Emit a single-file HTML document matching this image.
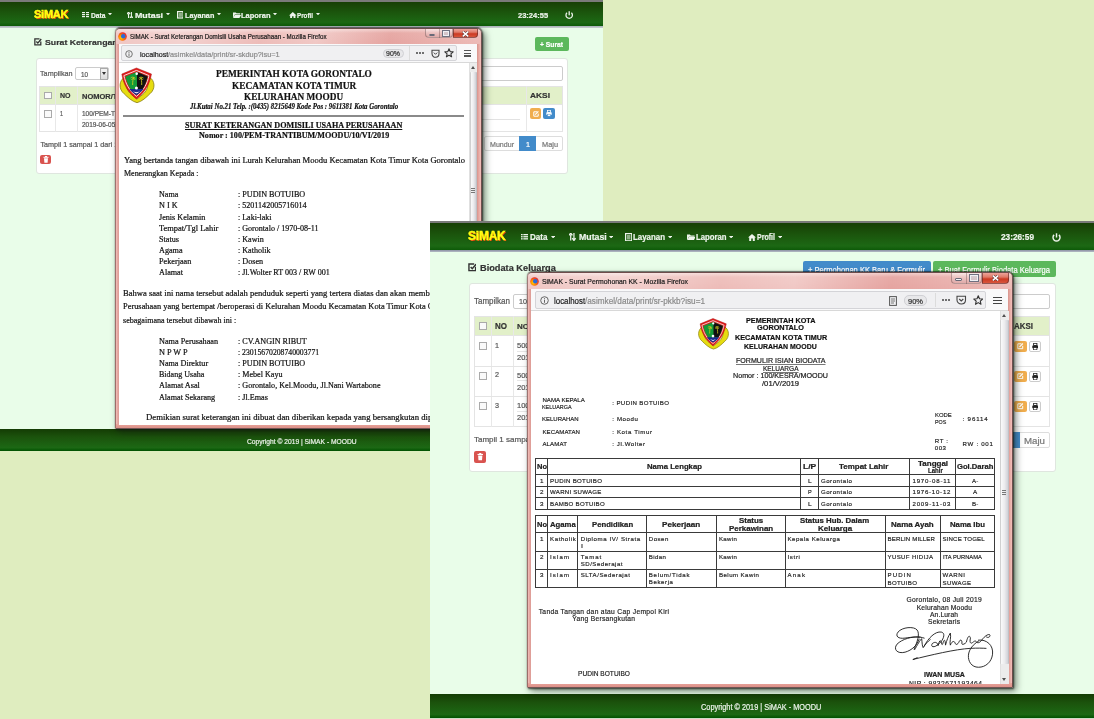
<!DOCTYPE html><html><head><meta charset="utf-8"><style>
html,body{margin:0;padding:0;}
body{width:1094px;height:719px;overflow:hidden;position:relative;background:#dfedbf;font-family:"Liberation Sans",sans-serif;}
.a{position:absolute;box-sizing:border-box;}
div.root{position:absolute;left:0;top:0;width:1094px;height:719px;filter:blur(0.3px);}
.t{white-space:nowrap;transform-origin:0 0;-webkit-text-stroke:0.2px currentColor;}

</style></head><body><div class="root"><div class="a " style="left:0.00px;top:0.00px;width:603.00px;height:451.00px;overflow:hidden;background:#e9fde9;"><div class="a" style="left:0.00px;top:0.00px;width:603.00px;height:1.50px;background:#7a7a7a;"></div><div class="a" style="left:0.00px;top:1.50px;width:603.00px;height:24.50px;background:linear-gradient(#173f05 0%,#1b560d 45%,#1c6814 85%,#0d5a08 100%);"></div><div class="a" style="left:0.00px;top:26.00px;width:603.00px;height:2.00px;background:linear-gradient(#a8aeb8,#c8d0d0);"></div><span class="a t" id="t0" style="transform:scaleX(1.0443);left:34.30px;top:8.18px;font:700 10.5px/13.65px 'Liberation Sans', sans-serif;color:#ffff10;-webkit-text-stroke:0.45px #ffff10;text-shadow:0.9px 0.5px 0 #e83a10,0 0 1.5px rgba(0,40,0,0.9);letter-spacing:-0.2px;">SiMAK</span><svg class="a" style="left:82.30px;top:12.00px;" width="7.0" height="6.0" viewBox="0 0 7.0 6.0"><rect x="0.00" y="0.00" width="3.00" height="1.20" fill="#eef4ec"/><rect x="4.00" y="0.00" width="3.00" height="1.20" fill="#eef4ec"/><rect x="0.00" y="2.00" width="3.00" height="1.20" fill="#eef4ec"/><rect x="4.00" y="2.00" width="3.00" height="1.20" fill="#eef4ec"/><rect x="0.00" y="4.00" width="3.00" height="1.20" fill="#eef4ec"/><rect x="4.00" y="4.00" width="3.00" height="1.20" fill="#eef4ec"/></svg><span class="a t" id="t1" style="transform:scaleX(0.9161);left:90.50px;top:10.66px;font:700 7.3px/9.49px 'Liberation Sans', sans-serif;color:#eef4ec;">Data</span><svg class="a" style="left:108.00px;top:13.00px;" width="4.0" height="2.4000000000000004" viewBox="0 0 4.0 2.4000000000000004"><path d="M0 0H4.0L2.0 2.4000000000000004Z" fill="#eef4ec"/></svg><svg class="a" style="left:127.00px;top:11.60px;" width="5.95" height="6.8" viewBox="0 0 5.95 6.8"><path d="M1.53 6.8 V1.5 M0 2.125 L1.53 0 L3.06 2.125 M4.42 0 V5.3 M2.8899999999999997 4.675 L4.42 6.8 L5.95 4.675" stroke="#eef4ec" stroke-width="1.105" fill="none"/></svg><span class="a t" id="t2" style="transform:scaleX(1.2116);left:135.00px;top:10.66px;font:700 7.3px/9.49px 'Liberation Sans', sans-serif;color:#eef4ec;">Mutasi</span><svg class="a" style="left:166.00px;top:13.00px;" width="4.0" height="2.4000000000000004" viewBox="0 0 4.0 2.4000000000000004"><path d="M0 0H4.0L2.0 2.4000000000000004Z" fill="#eef4ec"/></svg><svg class="a" style="left:176.60px;top:11.20px;" width="6.6499999999999995" height="7.6" viewBox="0 0 6.6499999999999995 7.6"><rect x="0.6" y="0.6" width="5.449999999999999" height="6.3999999999999995" fill="none" stroke="#eef4ec" stroke-width="1.2"/><rect x="1.71" y="1.71" width="3.2299999999999995" height="4.18" fill="#eef4ec" opacity="0.55"/></svg><span class="a t" id="t3" style="transform:scaleX(0.9896);left:184.60px;top:10.66px;font:700 7.3px/9.49px 'Liberation Sans', sans-serif;color:#eef4ec;">Layanan</span><svg class="a" style="left:216.50px;top:13.00px;" width="4.0" height="2.4000000000000004" viewBox="0 0 4.0 2.4000000000000004"><path d="M0 0H4.0L2.0 2.4000000000000004Z" fill="#eef4ec"/></svg><svg class="a" style="left:232.90px;top:11.85px;" width="8.1" height="6.3" viewBox="0 0 8.1 6.3"><path d="M0 6.3 V0.5 H2.7 L3.6 1.35 H7.2 V2.52 H1.8 Z" fill="#eef4ec"/><path d="M0 6.3 L1.8 2.8800000000000003 H8.1 L6.3 6.3 Z" fill="#eef4ec"/></svg><span class="a t" id="t4" style="transform:scaleX(1.0244);left:241.00px;top:10.66px;font:700 7.3px/9.49px 'Liberation Sans', sans-serif;color:#eef4ec;">Laporan</span><svg class="a" style="left:273.40px;top:13.00px;" width="4.0" height="2.4000000000000004" viewBox="0 0 4.0 2.4000000000000004"><path d="M0 0H4.0L2.0 2.4000000000000004Z" fill="#eef4ec"/></svg><svg class="a" style="left:289.00px;top:11.68px;" width="7.6" height="6.6499999999999995" viewBox="0 0 7.6 6.6499999999999995"><path d="M0 3.42 L3.8 0 L7.6 3.42 H6.46 V6.6499999999999995 H4.56 V4.369999999999999 H3.04 V6.6499999999999995 H1.14 V3.42 Z" fill="#eef4ec"/></svg><span class="a t" id="t5" style="transform:scaleX(0.8576);left:297.00px;top:10.66px;font:700 7.3px/9.49px 'Liberation Sans', sans-serif;color:#eef4ec;">Profil</span><svg class="a" style="left:316.00px;top:13.00px;" width="4.0" height="2.4000000000000004" viewBox="0 0 4.0 2.4000000000000004"><path d="M0 0H4.0L2.0 2.4000000000000004Z" fill="#eef4ec"/></svg><span class="a t" id="t6" style="transform:scaleX(1.0302);left:518.40px;top:10.66px;font:700 7.3px/9.49px 'Liberation Sans', sans-serif;color:#eef4ec;">23:24:55</span><svg class="a" style="left:564.60px;top:11.00px;" width="8.4" height="8.4" viewBox="0 0 8.4 8.4"><path d="M2.0 1.8000000000000003 A3.2 3.2 0 1 0 6.4 1.8000000000000003" stroke="#eef4ec" stroke-width="1.3" fill="none"/><path d="M4.2 0.3 V4.2" stroke="#eef4ec" stroke-width="1.3"/></svg><svg class="a" style="left:33.90px;top:38.38px;" width="7.6499999999999995" height="7.6499999999999995" viewBox="0 0 7.6499999999999995 7.6499999999999995"><path d="M5.5249999999999995 0.85 H0.85 V6.8 H6.8 V3.4" fill="none" stroke="#333" stroke-width="1.275"/><path d="M2.38 3.57 L3.8249999999999997 5.1 L7.225 1.02" fill="none" stroke="#333" stroke-width="1.36"/></svg><span class="a t" id="t7" style="transform:scaleX(1.0902);left:44.80px;top:38.00px;font:700 8px/10.4px 'Liberation Sans', sans-serif;color:#333;">Surat Keterangan</span><div class="a" style="left:534.50px;top:36.90px;width:34.00px;height:13.70px;background:#5cb85c;border-radius:2px;"></div><span class="a t" id="t8" style="transform:scaleX(0.8970);left:540.00px;top:39.92px;font:700 7.5px/9.75px 'Liberation Sans', sans-serif;color:#fff;">+ Surat</span><div class="a" style="left:35.90px;top:57.60px;width:532.60px;height:116.40px;background:#fff;border:1px solid #dfe6df;border-radius:3px;"></div><span class="a t" id="t9" style="transform:scaleX(0.9052);left:40.40px;top:69.00px;font:400 8px/10.4px 'Liberation Sans', sans-serif;color:#555;">Tampilkan</span><div class="a" style="left:75.40px;top:66.50px;width:33.60px;height:13.90px;background:#fff;border:1px solid #ccc;border-radius:2px;"></div><span class="a t" id="t10" style="transform:scaleX(0.8978);left:81.00px;top:70.25px;font:400 7px/9.1px 'Liberation Sans', sans-serif;color:#555;">10</span><div class="a" style="left:100.00px;top:67.50px;width:8.00px;height:12.00px;background:linear-gradient(#f4f4f4,#dcdcdc);border:1px solid #aaa;"></div><svg class="a" style="left:102.00px;top:72.00px;" width="4" height="3" viewBox="0 0 4 3"><path d="M0 0H4L2 3Z" fill="#333"/></svg><div class="a" style="left:440.00px;top:66.00px;width:122.60px;height:14.50px;background:#fff;border:1px solid #ccc;border-radius:2px;"></div><div class="a" style="left:39.40px;top:85.90px;width:523.20px;height:45.90px;background:#fff;border:1px solid #e4e4e4;"></div><div class="a" style="left:39.40px;top:85.90px;width:523.20px;height:18.80px;background:#e2f0c9;border:1px solid #e4e4e4;"></div><div class="a" style="left:54.60px;top:85.90px;width:1.00px;height:45.90px;background:#e8e8e8;"></div><div class="a" style="left:76.80px;top:85.90px;width:1.00px;height:45.90px;background:#e8e8e8;"></div><div class="a" style="left:525.60px;top:85.90px;width:1.00px;height:45.90px;background:#e8e8e8;"></div><div class="a" style="left:44.00px;top:91.50px;width:7.50px;height:7.50px;background:#fafafa;border:1px solid #aaa;"></div><span class="a t" id="t11" style="transform:scaleX(0.8750);left:60.00px;top:91.30px;font:700 8px/10.4px 'Liberation Sans', sans-serif;color:#333;">NO</span><span class="a t" id="t12" style="left:82.00px;top:91.62px;font:700 7.5px/9.75px 'Liberation Sans', sans-serif;color:#333;">NOMOR/TANGGAL</span><span class="a t" id="t13" style="transform:scaleX(1.0458);left:530.00px;top:91.30px;font:700 8px/10.4px 'Liberation Sans', sans-serif;color:#333;">AKSI</span><div class="a" style="left:44.00px;top:110.00px;width:7.50px;height:7.50px;background:#fafafa;border:1px solid #aaa;"></div><span class="a t" id="t14" style="transform:scaleX(0.7191);left:60.00px;top:109.12px;font:400 7.5px/9.75px 'Liberation Sans', sans-serif;color:#555;">1</span><span class="a t" id="t15" style="left:82.00px;top:109.78px;font:400 6.5px/8.450000000000001px 'Liberation Sans', sans-serif;color:#555;">100/PEM-TRANTIBUM/MOODU</span><div class="a" style="left:82.00px;top:118.50px;width:438.00px;height:0.80px;background:#e2e2e2;"></div><span class="a t" id="t16" style="left:82.00px;top:120.98px;font:400 6.5px/8.450000000000001px 'Liberation Sans', sans-serif;color:#555;">2019-06-05</span><div class="a" style="left:530.20px;top:108.40px;width:10.80px;height:10.60px;background:#f0ad4e;border-radius:2px;"></div><svg class="a" style="left:532.60px;top:110.60px;" width="6" height="6" viewBox="0 0 6 6"><path d="M4.2 0.8 H0.8 V5.2 H5.2 V2.6" fill="none" stroke="#fff" stroke-width="1"/><path d="M2.2 3.6 L5.4 0.4" stroke="#fff" stroke-width="1.1"/></svg><div class="a" style="left:543.00px;top:108.40px;width:11.60px;height:10.60px;background:#428bca;border-radius:2px;"></div><svg class="a" style="left:545.80px;top:110.30px;" width="6" height="6.5" viewBox="0 0 6 6.5"><rect x="1.5" y="0.3" width="3" height="2" fill="none" stroke="#fff" stroke-width="0.8"/><rect x="0.3" y="2.3" width="5.4" height="2.6" rx="0.6" fill="#fff"/><rect x="1.5" y="4.2" width="3" height="2" fill="#fff" stroke="#428bca" stroke-width="0.5"/></svg><span class="a t" id="t17" style="left:40.40px;top:139.92px;font:400 7.2px/9.360000000000001px 'Liberation Sans', sans-serif;color:#555;">Tampil 1 sampai 1 dari 1 data</span><div class="a" style="left:484.00px;top:136.30px;width:78.60px;height:15.00px;background:#fff;border:1px solid #ddd;border-radius:2px;"></div><div class="a" style="left:519.20px;top:136.30px;width:17.00px;height:15.00px;background:#428bca;"></div><span class="a t" id="t18" style="transform:scaleX(0.9435);left:490.00px;top:139.93px;font:400 7.5px/9.75px 'Liberation Sans', sans-serif;color:#777;">Mundur</span><span class="a t" id="t19" style="transform:scaleX(0.9588);left:526.00px;top:139.93px;font:400 7.5px/9.75px 'Liberation Sans', sans-serif;color:#fff;">1</span><span class="a t" id="t20" style="transform:scaleX(0.9837);left:542.00px;top:139.93px;font:400 7.5px/9.75px 'Liberation Sans', sans-serif;color:#777;">Maju</span><div class="a" style="left:39.80px;top:154.50px;width:10.90px;height:9.90px;background:#d9534f;border-radius:2px;"></div><svg class="a" style="left:42.50px;top:156.30px;" width="6" height="7" viewBox="0 0 6 7"><rect x="0.5" y="0.8" width="5" height="1" fill="#fff"/><rect x="2" y="0" width="2" height="1" fill="#fff"/><path d="M1 2.3 H5 L4.6 6.8 H1.4 Z" fill="#fff"/></svg><div class="a" style="left:0.00px;top:429.00px;width:603.00px;height:22.00px;background:linear-gradient(#143c04 0%,#1b520c 35%,#1c6814 85%,#005200 100%);"></div><span class="a t" id="t21" style="transform:scaleX(0.8915);left:246.50px;top:436.62px;font:400 7.5px/9.75px 'Liberation Sans', sans-serif;color:#eef4ec;">Copyright © 2019 | SiMAK - MOODU</span><div class="a" style="left:114.50px;top:28.30px;width:367.50px;height:400.90px;box-shadow:0 -1px 1px rgba(0,0,0,0.5),1px 1px 2px rgba(20,30,20,0.75),3px 3px 7px rgba(20,30,20,0.55);border-radius:5px 5px 1px 1px;"></div><div class="a" style="left:114.50px;top:28.30px;width:367.50px;height:400.90px;background:linear-gradient(180deg,#eebcb8 0%,#e8aca8 6%,#e8a6a2 40%,#e69c96 100%);border:1px solid rgba(70,50,50,0.75);border-left-color:rgba(70,50,50,0.45);border-radius:5px 5px 1px 1px;"></div><div class="a" style="left:115.50px;top:29.30px;width:365.50px;height:14.70px;background:linear-gradient(100deg,rgba(255,255,255,0.25) 0%,rgba(255,255,255,0.4) 18%,rgba(255,255,255,0.12) 40%,rgba(255,255,255,0.28) 55%,rgba(190,60,60,0.12) 75%,rgba(255,255,255,0.1) 100%);border-radius:4px 4px 0 0;"></div><div class="a" style="left:115.50px;top:29.30px;width:365.50px;height:4.00px;background:linear-gradient(rgba(255,255,255,0.4),rgba(255,255,255,0));border-radius:4px 4px 0 0;"></div><div class="a" style="left:477.00px;top:44.00px;width:4.00px;height:384.20px;background:linear-gradient(90deg,#d8948c,#e8aaa4 50%,#f2c0bc);"></div><div class="a" style="left:115.50px;top:44.00px;width:3.50px;height:384.20px;background:linear-gradient(90deg,#f0c0bc,#e6a8a2 50%,#dc9a94);"></div><div class="a" style="left:115.50px;top:424.20px;width:365.50px;height:4.00px;background:linear-gradient(#e8a49c,#dc9088);"></div><svg class="a" style="left:118.00px;top:32.15px;" width="9.0" height="9.0" viewBox="0 0 9.0 9.0"><defs><radialGradient id="fg114" cx="0.35" cy="0.65" r="0.7"><stop offset="0" stop-color="#ffd000"/><stop offset="0.5" stop-color="#ff7a00"/><stop offset="1" stop-color="#e0203a"/></radialGradient></defs><circle cx="4.5" cy="4.5" r="4.3" fill="url(#fg114)"/><circle cx="5.2" cy="4.2" r="2.2" fill="#2a6ad8"/></svg><span class="a t" id="t22" style="transform:scaleX(0.9526);left:129.50px;top:33.42px;font:400 6.5px/8.450000000000001px 'Liberation Sans', sans-serif;color:#1a1a1a;">SiMAK - Surat Keterangan Domisili Usaha Perusahaan - Mozilla Firefox</span><div class="a" style="left:425.00px;top:28.80px;width:28.00px;height:9.50px;background:linear-gradient(rgba(255,245,245,0.55),rgba(235,205,205,0.5) 50%,rgba(210,160,160,0.45));border:1px solid rgba(90,60,60,0.4);border-top:none;border-radius:0 0 4px 4px;"></div><div class="a" style="left:438.50px;top:28.80px;width:0.80px;height:9.50px;background:rgba(90,60,60,0.35);"></div><div class="a" style="left:453.00px;top:28.80px;width:25.00px;height:9.50px;background:linear-gradient(#eca49a 0%,#e07a68 40%,#cc3a22 60%,#d8553c 100%);border:1px solid rgba(90,40,40,0.6);border-top:none;border-radius:0 0 4px 0;"></div><div class="a" style="left:428.78px;top:33.55px;width:5.94px;height:2.40px;background:#f4f4f8;border:0.7px solid #6a6a78;border-radius:1px;"></div><div class="a" style="left:442.56px;top:30.89px;width:6.38px;height:4.75px;border:1.4px solid #f0f0f4;outline:0.6px solid #707080;background:rgba(200,200,210,0.6);"></div><svg class="a" style="left:462.00px;top:30.55px;" width="7.0" height="6.0" viewBox="0 0 7.0 6.0"><path d="M0.8 0.6 L6.2 5.4 M6.2 0.6 L0.8 5.4" stroke="#5a2a2a" stroke-width="2.6"/><path d="M0.8 0.6 L6.2 5.4 M6.2 0.6 L0.8 5.4" stroke="#fff" stroke-width="1.6"/></svg><div class="a" style="left:119.00px;top:44.00px;width:358.20px;height:19.00px;background:#f9f9fa;border-bottom:1px solid #d8d8d8;"></div><div class="a" style="left:121.20px;top:44.50px;width:336.30px;height:16.50px;background:#f0f0f2;border:1px solid #d4d4d8;border-radius:2px;"></div><svg class="a" style="left:124.50px;top:49.50px;" width="8" height="8" viewBox="0 0 8 8"><circle cx="4" cy="4" r="3.3" fill="none" stroke="#666" stroke-width="0.9"/><rect x="3.55" y="3.4" width="0.9" height="2.6" fill="#666"/><rect x="3.55" y="2" width="0.9" height="0.9" fill="#666"/></svg><span class="a t" id="t23" style="transform:scaleX(0.9558);left:139.50px;top:49.73px;font:400 7.5px/9.75px 'Liberation Sans', sans-serif;color:#202020;">localhost</span><span class="a t" id="t24" style="transform:scaleX(0.9788);left:167.80px;top:49.73px;font:400 7.5px/9.75px 'Liberation Sans', sans-serif;color:#8a8a8a;">/asimkel/data/print/sr-skdup?isu=1</span><div class="a" style="left:382.50px;top:48.80px;width:21.20px;height:9.50px;background:#e8e8ea;border:1px solid #d0d0d4;border-radius:5px;"></div><span class="a t" id="t25" style="transform:scaleX(1.0756);left:386.00px;top:50.38px;font:400 6.5px/8.450000000000001px 'Liberation Sans', sans-serif;color:#333;">90%</span><div class="a" style="left:409.00px;top:46.00px;width:0.80px;height:13.50px;background:#dcdcdc;"></div><div class="a" style="left:416.30px;top:52.30px;width:1.80px;height:1.80px;background:#444;border-radius:1px;"></div><div class="a" style="left:419.30px;top:52.30px;width:1.80px;height:1.80px;background:#444;border-radius:1px;"></div><div class="a" style="left:422.30px;top:52.30px;width:1.80px;height:1.80px;background:#444;border-radius:1px;"></div><svg class="a" style="left:430.70px;top:48.60px;" width="9" height="9" viewBox="0 0 9 9"><path d="M1 1.2 H8 V4.5 C8 6.8 6.3 8.3 4.5 8.3 C2.7 8.3 1 6.8 1 4.5 Z" fill="none" stroke="#444" stroke-width="1.1"/><path d="M2.8 3.6 L4.5 5.3 L6.2 3.6" fill="none" stroke="#444" stroke-width="1"/></svg><svg class="a" style="left:444.30px;top:48.40px;" width="10" height="10" viewBox="0 0 10 10"><path d="M5 0.8 L6.2 3.6 L9.2 3.8 L6.9 5.8 L7.6 8.8 L5 7.2 L2.4 8.8 L3.1 5.8 L0.8 3.8 L3.8 3.6 Z" fill="none" stroke="#333" stroke-width="1.1" stroke-linejoin="round"/></svg><div class="a" style="left:464.30px;top:50.20px;width:6.70px;height:1.20px;background:#555;"></div><div class="a" style="left:464.30px;top:52.80px;width:6.70px;height:1.20px;background:#555;"></div><div class="a" style="left:464.30px;top:55.40px;width:6.70px;height:1.20px;background:#555;"></div><div class="a" style="left:119.00px;top:63.00px;width:350.00px;height:362.30px;background:#fff;"></div><div class="a" style="left:469.00px;top:63.00px;width:8.00px;height:362.30px;background:#ececec;border-left:1px solid #e0e0e0;"></div><svg class="a" style="left:471.00px;top:66.00px;" width="4" height="3" viewBox="0 0 4 3"><path d="M0 3H4L2 0Z" fill="#505050"/></svg><svg class="a" style="left:471.00px;top:419.30px;" width="4" height="3" viewBox="0 0 4 3"><path d="M0 0H4L2 3Z" fill="#505050"/></svg><div class="a" style="left:469.50px;top:71.50px;width:7.50px;height:263.50px;background:linear-gradient(90deg,#fafafa,#ececee 50%,#d0d0d6);border-left:1px solid #d0d0d0;border-right:1px solid #c0c0c4;border-radius:1px;"></div><div class="a" style="left:471.40px;top:188.00px;width:3.20px;height:0.80px;background:#777;"></div><div class="a" style="left:471.40px;top:189.90px;width:3.20px;height:0.80px;background:#777;"></div><div class="a" style="left:471.40px;top:191.80px;width:3.20px;height:0.80px;background:#777;"></div><svg class="a" style="left:116.00px;top:64.00px;" width="42" height="42" viewBox="0 0 719 719"><path d="M150 225 C50 280 40 430 140 510 C200 570 280 645 360 662 C440 645 520 570 580 510 C680 430 670 280 570 225 L540 300 C560 390 520 470 460 520 L360 600 L260 520 C200 470 160 390 180 300 Z" fill="#e6dc10" stroke="#8a8010" stroke-width="14"/>
<path d="M350 68 L608 172 C575 335 510 475 350 600 C190 475 125 335 100 172 Z" fill="#e01a1a" stroke="#a01010" stroke-width="8"/>
<path d="M350 110 L565 198 C535 335 480 450 350 555 C220 450 165 335 135 198 Z" fill="none" stroke="#f4e8e8" stroke-width="16"/>
<path d="M350 135 L540 212 C512 335 462 440 350 530 C238 440 188 335 160 212 Z" fill="#139a38"/>
<path d="M360 139 L540 212 C520 300 495 370 455 430 L360 430 Z" fill="#111"/>
<path d="M228 430 L472 430 C440 475 400 505 350 530 C300 505 260 475 228 430 Z" fill="#1a2a90"/>
<path d="M290 470 L350 505 L410 470 L350 485 Z" fill="#fff"/>
<path d="M285 360 C285 300 290 260 300 230 M250 240 C270 220 300 220 330 245 M265 270 C285 240 310 240 325 270 M440 360 C440 300 435 260 425 230 M390 245 C410 220 440 220 470 240 M400 270 C415 240 440 240 460 270" stroke="#d8d020" stroke-width="14" fill="none"/>
<circle cx="355" cy="165" r="22" fill="#fff"/><circle cx="350" cy="410" r="26" fill="#fff"/></svg><span class="a t" id="t26" style="transform:scaleX(0.9353);left:215.70px;top:66.70px;font:700 10px/13.0px 'Liberation Serif', serif;color:#111;">PEMERINTAH KOTA GORONTALO</span><span class="a t" id="t27" style="transform:scaleX(0.9373);left:231.70px;top:79.30px;font:700 10px/13.0px 'Liberation Serif', serif;color:#111;">KECAMATAN KOTA TIMUR</span><span class="a t" id="t28" style="transform:scaleX(0.9266);left:244.40px;top:90.30px;font:700 10px/13.0px 'Liberation Serif', serif;color:#111;">KELURAHAN MOODU</span><span class="a t" id="t29" style="transform:scaleX(0.8582);left:189.50px;top:102.40px;font:italic 700 8px/10.4px 'Liberation Serif', serif;color:#111;">Jl.Kutai No.21 Telp. :(0435) 8215649 Kode Pos : 9611381 Kota Gorontalo</span><div class="a" style="left:122.60px;top:114.60px;width:341.90px;height:2.00px;background:#8a8a8a;"></div><span class="a t" id="t30" style="transform:scaleX(0.9578);left:185.20px;top:120.07px;font:700 8.5px/11.05px 'Liberation Serif', serif;color:#111;text-decoration:underline;">SURAT KETERANGAN DOMISILI USAHA PERUSAHAAN</span><span class="a t" id="t31" style="transform:scaleX(0.9507);left:198.80px;top:130.28px;font:700 8.5px/11.05px 'Liberation Serif', serif;color:#111;">Nomor : 100/PEM-TRANTIBUM/MOODU/10/VI/2019</span><span class="a t" id="t32" style="transform:scaleX(1.0671);left:123.50px;top:155.90px;font:400 8.0px/10.4px 'Liberation Serif', serif;color:#111;">Yang bertanda tangan dibawah ini Lurah Kelurahan Moodu Kecamatan Kota Timur Kota Gorontalo</span><span class="a t" id="t33" style="transform:scaleX(0.9968);left:123.50px;top:168.60px;font:400 8.0px/10.4px 'Liberation Serif', serif;color:#111;">Menerangkan Kepada :</span><span class="a t" id="t34" style="transform:scaleX(1.0100);left:158.70px;top:190.10px;font:400 8.0px/10.4px 'Liberation Serif', serif;color:#111;">Nama</span><span class="a t" id="t35" style="transform:scaleX(1.0146);left:238.00px;top:190.10px;font:400 8.0px/10.4px 'Liberation Serif', serif;color:#111;">: PUDIN BOTUIBO</span><span class="a t" id="t36" style="transform:scaleX(1.0264);left:158.70px;top:201.30px;font:400 8.0px/10.4px 'Liberation Serif', serif;color:#111;">N I K</span><span class="a t" id="t37" style="transform:scaleX(1.0083);left:238.00px;top:201.30px;font:400 8.0px/10.4px 'Liberation Serif', serif;color:#111;">: 5201142005716014</span><span class="a t" id="t38" style="transform:scaleX(1.0165);left:158.70px;top:212.70px;font:400 8.0px/10.4px 'Liberation Serif', serif;color:#111;">Jenis Kelamin</span><span class="a t" id="t39" style="transform:scaleX(1.0016);left:238.00px;top:212.70px;font:400 8.0px/10.4px 'Liberation Serif', serif;color:#111;">: Laki-laki</span><span class="a t" id="t40" style="transform:scaleX(1.0490);left:158.70px;top:223.90px;font:400 8.0px/10.4px 'Liberation Serif', serif;color:#111;">Tempat/Tgl Lahir</span><span class="a t" id="t41" style="transform:scaleX(1.0072);left:238.00px;top:223.90px;font:400 8.0px/10.4px 'Liberation Serif', serif;color:#111;">: Gorontalo / 1970-08-11</span><span class="a t" id="t42" style="transform:scaleX(1.0224);left:158.70px;top:234.90px;font:400 8.0px/10.4px 'Liberation Serif', serif;color:#111;">Status</span><span class="a t" id="t43" style="transform:scaleX(1.0093);left:238.00px;top:234.90px;font:400 8.0px/10.4px 'Liberation Serif', serif;color:#111;">: Kawin</span><span class="a t" id="t44" style="transform:scaleX(1.0212);left:158.70px;top:246.10px;font:400 8.0px/10.4px 'Liberation Serif', serif;color:#111;">Agama</span><span class="a t" id="t45" style="transform:scaleX(1.0118);left:238.00px;top:246.10px;font:400 8.0px/10.4px 'Liberation Serif', serif;color:#111;">: Katholik</span><span class="a t" id="t46" style="transform:scaleX(1.0239);left:158.70px;top:257.10px;font:400 8.0px/10.4px 'Liberation Serif', serif;color:#111;">Pekerjaan</span><span class="a t" id="t47" style="transform:scaleX(1.0214);left:238.00px;top:257.10px;font:400 8.0px/10.4px 'Liberation Serif', serif;color:#111;">: Dosen</span><span class="a t" id="t48" style="transform:scaleX(1.0192);left:158.70px;top:268.40px;font:400 8.0px/10.4px 'Liberation Serif', serif;color:#111;">Alamat</span><span class="a t" id="t49" style="transform:scaleX(1.0060);left:238.00px;top:268.40px;font:400 8.0px/10.4px 'Liberation Serif', serif;color:#111;">: Jl.Wolter RT 003 / RW 001</span><span class="a t" id="t50" style="transform:scaleX(1.0698);left:123.20px;top:289.30px;font:400 8.0px/10.4px 'Liberation Serif', serif;color:#111;">Bahwa saat ini nama tersebut adalah penduduk seperti yang tertera diatas dan akan memb</span><span class="a t" id="t51" style="transform:scaleX(1.0479);left:123.20px;top:302.40px;font:400 8.0px/10.4px 'Liberation Serif', serif;color:#111;">Perusahaan yang bertempat /beroperasi di Kelurahan Moodu Kecamatan Kota Timur Kota G</span><span class="a t" id="t52" style="transform:scaleX(1.0071);left:123.20px;top:315.60px;font:400 8.0px/10.4px 'Liberation Serif', serif;color:#111;">sebagaimana tersebut dibawah ini :</span><span class="a t" id="t53" style="transform:scaleX(1.0273);left:158.90px;top:336.60px;font:400 8.0px/10.4px 'Liberation Serif', serif;color:#111;">Nama Perusahaan</span><span class="a t" id="t54" style="transform:scaleX(1.0106);left:237.80px;top:336.60px;font:400 8.0px/10.4px 'Liberation Serif', serif;color:#111;">: CV.ANGIN RIBUT</span><span class="a t" id="t55" style="transform:scaleX(1.0347);left:158.90px;top:347.60px;font:400 8.0px/10.4px 'Liberation Serif', serif;color:#111;">N P W P</span><span class="a t" id="t56" style="transform:scaleX(0.9628);left:237.80px;top:347.60px;font:400 8.0px/10.4px 'Liberation Serif', serif;color:#111;">: 23015670208740003771</span><span class="a t" id="t57" style="transform:scaleX(1.0186);left:158.90px;top:358.90px;font:400 8.0px/10.4px 'Liberation Serif', serif;color:#111;">Nama Direktur</span><span class="a t" id="t58" style="transform:scaleX(1.0146);left:237.80px;top:358.90px;font:400 8.0px/10.4px 'Liberation Serif', serif;color:#111;">: PUDIN BOTUIBO</span><span class="a t" id="t59" style="transform:scaleX(1.0042);left:158.90px;top:370.10px;font:400 8.0px/10.4px 'Liberation Serif', serif;color:#111;">Bidang Usaha</span><span class="a t" id="t60" style="transform:scaleX(1.0114);left:237.80px;top:370.10px;font:400 8.0px/10.4px 'Liberation Serif', serif;color:#111;">: Mebel Kayu</span><span class="a t" id="t61" style="transform:scaleX(1.0281);left:158.90px;top:381.40px;font:400 8.0px/10.4px 'Liberation Serif', serif;color:#111;">Alamat Asal</span><span class="a t" id="t62" style="transform:scaleX(1.0141);left:237.80px;top:381.40px;font:400 8.0px/10.4px 'Liberation Serif', serif;color:#111;">: Gorontalo, Kel.Moodu, Jl.Nani Wartabone</span><span class="a t" id="t63" style="transform:scaleX(1.0142);left:158.90px;top:393.10px;font:400 8.0px/10.4px 'Liberation Serif', serif;color:#111;">Alamat Sekarang</span><span class="a t" id="t64" style="transform:scaleX(1.0190);left:237.80px;top:393.10px;font:400 8.0px/10.4px 'Liberation Serif', serif;color:#111;">: Jl.Emas</span><span class="a t" id="t65" style="transform:scaleX(1.0867);left:145.70px;top:413.00px;font:400 8.0px/10.4px 'Liberation Serif', serif;color:#111;">Demikian surat keterangan ini dibuat dan diberikan kepada yang bersangkutan dip</span></div><div class="a " style="left:430.00px;top:221.00px;width:664.00px;height:498.00px;overflow:hidden;background:#e9fde9;"><div class="a" style="left:0.00px;top:0.00px;width:664.00px;height:2.00px;background:#7a7a7a;"></div><div class="a" style="left:0.00px;top:1.50px;width:664.00px;height:27.50px;background:linear-gradient(#173f05 0%,#1b560d 45%,#1c6814 85%,#0d5a08 100%);"></div><div class="a" style="left:0.00px;top:29.00px;width:664.00px;height:2.00px;background:linear-gradient(#8c90a4,#b4bcc4);"></div><span class="a t" id="t66" style="transform:scaleX(0.9954);left:37.80px;top:8.30px;font:700 12px/15.600000000000001px 'Liberation Sans', sans-serif;color:#ffff10;-webkit-text-stroke:0.45px #ffff10;text-shadow:0.9px 0.5px 0 #e83a10,0 0 1.5px rgba(0,40,0,0.9);letter-spacing:-0.2px;">SiMAK</span><svg class="a" style="left:90.80px;top:12.85px;" width="7.3500000000000005" height="6.300000000000001" viewBox="0 0 7.3500000000000005 6.300000000000001"><rect x="0" y="0.00" width="1.68" height="1.30" fill="#eef4ec"/><rect x="2.31" y="0.00" width="5.04" height="1.30" fill="#eef4ec"/><rect x="0" y="2.10" width="1.68" height="1.30" fill="#eef4ec"/><rect x="2.31" y="2.10" width="5.04" height="1.30" fill="#eef4ec"/><rect x="0" y="4.20" width="1.68" height="1.30" fill="#eef4ec"/><rect x="2.31" y="4.20" width="5.04" height="1.30" fill="#eef4ec"/></svg><span class="a t" id="t67" style="transform:scaleX(0.9859);left:99.50px;top:11.97px;font:700 8.2px/10.66px 'Liberation Sans', sans-serif;color:#eef4ec;">Data</span><svg class="a" style="left:120.50px;top:14.80px;" width="4.25" height="2.55" viewBox="0 0 4.25 2.55"><path d="M0 0H4.25L2.125 2.55Z" fill="#eef4ec"/></svg><svg class="a" style="left:139.00px;top:12.20px;" width="6.6499999999999995" height="7.6" viewBox="0 0 6.6499999999999995 7.6"><path d="M1.71 7.6 V1.5 M0 2.375 L1.71 0 L3.42 2.375 M4.9399999999999995 0 V6.1 M3.23 5.225 L4.9399999999999995 7.6 L6.6499999999999995 5.225" stroke="#eef4ec" stroke-width="1.2349999999999999" fill="none"/></svg><span class="a t" id="t68" style="transform:scaleX(1.0718);left:148.70px;top:11.97px;font:700 8.2px/10.66px 'Liberation Sans', sans-serif;color:#eef4ec;">Mutasi</span><svg class="a" style="left:178.50px;top:14.80px;" width="4.25" height="2.55" viewBox="0 0 4.25 2.55"><path d="M0 0H4.25L2.125 2.55Z" fill="#eef4ec"/></svg><svg class="a" style="left:194.60px;top:11.80px;" width="7.3500000000000005" height="8.4" viewBox="0 0 7.3500000000000005 8.4"><rect x="0.6" y="0.6" width="6.15" height="7.2" fill="none" stroke="#eef4ec" stroke-width="1.2"/><rect x="1.8900000000000001" y="1.8900000000000001" width="3.5700000000000003" height="4.62" fill="#eef4ec" opacity="0.55"/></svg><span class="a t" id="t69" style="transform:scaleX(0.9633);left:203.00px;top:11.97px;font:700 8.2px/10.66px 'Liberation Sans', sans-serif;color:#eef4ec;">Layanan</span><svg class="a" style="left:238.00px;top:14.80px;" width="4.25" height="2.55" viewBox="0 0 4.25 2.55"><path d="M0 0H4.25L2.125 2.55Z" fill="#eef4ec"/></svg><svg class="a" style="left:256.80px;top:12.68px;" width="8.549999999999999" height="6.6499999999999995" viewBox="0 0 8.549999999999999 6.6499999999999995"><path d="M0 6.6499999999999995 V0.5 H2.8499999999999996 L3.8 1.4249999999999998 H7.6 V2.6599999999999997 H1.9 Z" fill="#eef4ec"/><path d="M0 6.6499999999999995 L1.9 3.04 H8.549999999999999 L6.6499999999999995 6.6499999999999995 Z" fill="#eef4ec"/></svg><span class="a t" id="t70" style="transform:scaleX(0.9439);left:265.50px;top:11.97px;font:700 8.2px/10.66px 'Liberation Sans', sans-serif;color:#eef4ec;">Laporan</span><svg class="a" style="left:299.00px;top:14.80px;" width="4.25" height="2.55" viewBox="0 0 4.25 2.55"><path d="M0 0H4.25L2.125 2.55Z" fill="#eef4ec"/></svg><svg class="a" style="left:318.00px;top:12.50px;" width="8.0" height="7.0" viewBox="0 0 8.0 7.0"><path d="M0 3.6 L4.0 0 L8.0 3.6 H6.8 V7.0 H4.8 V4.6 H3.2 V7.0 H1.2 V3.6 Z" fill="#eef4ec"/></svg><span class="a t" id="t71" style="transform:scaleX(0.8597);left:327.00px;top:11.97px;font:700 8.2px/10.66px 'Liberation Sans', sans-serif;color:#eef4ec;">Profil</span><svg class="a" style="left:348.00px;top:14.80px;" width="4.25" height="2.55" viewBox="0 0 4.25 2.55"><path d="M0 0H4.25L2.125 2.55Z" fill="#eef4ec"/></svg><span class="a t" id="t72" style="transform:scaleX(1.0067);left:570.80px;top:11.97px;font:700 8.2px/10.66px 'Liberation Sans', sans-serif;color:#eef4ec;">23:26:59</span><svg class="a" style="left:622.00px;top:11.78px;" width="9.040000000000001" height="9.040000000000001" viewBox="0 0 9.040000000000001 9.040000000000001"><path d="M2.1 1.8800000000000003 A3.5200000000000005 3.5200000000000005 0 1 0 6.940000000000001 1.8800000000000003" stroke="#eef4ec" stroke-width="1.4300000000000002" fill="none"/><path d="M4.5200000000000005 0.3 V4.5200000000000005" stroke="#eef4ec" stroke-width="1.4300000000000002"/></svg><svg class="a" style="left:37.80px;top:42.23px;" width="8.549999999999999" height="8.549999999999999" viewBox="0 0 8.549999999999999 8.549999999999999"><path d="M6.175 0.95 H0.95 V7.6 H7.6 V3.8" fill="none" stroke="#333" stroke-width="1.4249999999999998"/><path d="M2.6599999999999997 3.9899999999999998 L4.2749999999999995 5.699999999999999 L8.075 1.14" fill="none" stroke="#333" stroke-width="1.52"/></svg><span class="a t" id="t73" style="transform:scaleX(1.0239);left:49.70px;top:41.75px;font:700 9px/11.700000000000001px 'Liberation Sans', sans-serif;color:#333;">Biodata Keluarga</span><div class="a" style="left:373.30px;top:40.40px;width:127.50px;height:16.10px;background:#428bca;border-radius:2px;"></div><span class="a t" id="t74" style="transform:scaleX(0.8892);left:378.00px;top:43.68px;font:400 8.5px/11.05px 'Liberation Sans', sans-serif;color:#fff;">+ Permohonan KK Baru &amp; Formulir</span><div class="a" style="left:503.30px;top:40.20px;width:122.70px;height:16.30px;background:#5cb85c;border-radius:2px;"></div><span class="a t" id="t75" style="transform:scaleX(0.8894);left:508.00px;top:43.68px;font:400 8.5px/11.05px 'Liberation Sans', sans-serif;color:#fff;">+ Buat Formulir Biodata Keluarga</span><div class="a" style="left:38.70px;top:62.00px;width:587.10px;height:189.00px;background:#fff;border:1px solid #dfe6df;border-radius:3px;"></div><span class="a t" id="t76" style="transform:scaleX(0.8882);left:44.00px;top:74.95px;font:400 9px/11.700000000000001px 'Liberation Sans', sans-serif;color:#555;">Tampilkan</span><div class="a" style="left:82.70px;top:73.00px;width:47.30px;height:14.70px;background:#fff;border:1px solid #ccc;border-radius:2px;"></div><span class="a t" id="t77" style="transform:scaleX(0.8982);left:89.00px;top:76.40px;font:400 8px/10.4px 'Liberation Sans', sans-serif;color:#555;">10</span><div class="a" style="left:470.00px;top:73.00px;width:149.50px;height:15.00px;background:#fff;border:1px solid #ccc;border-radius:2px;"></div><div class="a" style="left:44.25px;top:94.50px;width:575.25px;height:111.50px;background:#fff;border:1px solid #e4e4e4;"></div><div class="a" style="left:44.25px;top:94.50px;width:575.25px;height:20.50px;background:#e2f0c9;border:1px solid #e4e4e4;"></div><div class="a" style="left:60.50px;top:94.50px;width:1.00px;height:111.50px;background:#e8e8e8;"></div><div class="a" style="left:83.00px;top:94.50px;width:1.00px;height:111.50px;background:#e8e8e8;"></div><div class="a" style="left:580.00px;top:94.50px;width:1.00px;height:111.50px;background:#e8e8e8;"></div><div class="a" style="left:44.25px;top:144.60px;width:575.25px;height:1.00px;background:#e4e4e4;"></div><div class="a" style="left:44.25px;top:175.00px;width:575.25px;height:1.00px;background:#e4e4e4;"></div><div class="a" style="left:48.50px;top:100.50px;width:8.00px;height:8.00px;background:#fafafa;border:1px solid #aaa;"></div><span class="a t" id="t78" style="transform:scaleX(0.9412);left:65.00px;top:100.48px;font:700 8.5px/11.05px 'Liberation Sans', sans-serif;color:#333;">NO</span><span class="a t" id="t79" style="left:87.00px;top:100.80px;font:700 8px/10.4px 'Liberation Sans', sans-serif;color:#333;">NOMOR KK</span><span class="a t" id="t80" style="transform:scaleX(0.9354);left:584.00px;top:100.48px;font:700 8.5px/11.05px 'Liberation Sans', sans-serif;color:#333;">AKSI</span><div class="a" style="left:48.50px;top:121.00px;width:8.00px;height:8.00px;background:#fafafa;border:1px solid #aaa;"></div><span class="a t" id="t81" style="transform:scaleX(0.8982);left:65.00px;top:119.80px;font:400 8px/10.4px 'Liberation Sans', sans-serif;color:#555;">1</span><span class="a t" id="t82" style="left:87.00px;top:120.12px;font:400 7.5px/9.75px 'Liberation Sans', sans-serif;color:#555;">5001010203</span><div class="a" style="left:87.00px;top:129.50px;width:488.00px;height:0.80px;background:#e6e6e6;"></div><span class="a t" id="t83" style="left:87.00px;top:132.12px;font:400 7.5px/9.75px 'Liberation Sans', sans-serif;color:#555;">2019-06-05</span><div class="a" style="left:584.00px;top:120.00px;width:12.60px;height:11.00px;background:#f0ad4e;border-radius:2px;"></div><svg class="a" style="left:587.00px;top:122.30px;" width="6.5" height="6.5" viewBox="0 0 6.5 6.5"><path d="M4.4 0.8 H0.8 V5.7 H5.7 V2.8" fill="none" stroke="#fff" stroke-width="1"/><path d="M2.4 4 L5.9 0.5" stroke="#fff" stroke-width="1.1"/></svg><div class="a" style="left:599.00px;top:120.00px;width:12.00px;height:11.00px;background:#fff;border:1px solid #ccc;border-radius:2px;"></div><svg class="a" style="left:601.80px;top:122.30px;" width="6.5" height="7" viewBox="0 0 6.5 7"><rect x="1.6" y="0.3" width="3.3" height="2.2" fill="none" stroke="#222" stroke-width="0.9"/><rect x="0.3" y="2.5" width="5.9" height="2.8" rx="0.6" fill="#222"/><rect x="1.6" y="4.6" width="3.3" height="2.2" fill="#fff" stroke="#222" stroke-width="0.7"/></svg><div class="a" style="left:48.50px;top:150.60px;width:8.00px;height:8.00px;background:#fafafa;border:1px solid #aaa;"></div><span class="a t" id="t84" style="transform:scaleX(0.8982);left:65.00px;top:149.40px;font:400 8px/10.4px 'Liberation Sans', sans-serif;color:#555;">2</span><span class="a t" id="t85" style="left:87.00px;top:149.73px;font:400 7.5px/9.75px 'Liberation Sans', sans-serif;color:#555;">5001010203</span><div class="a" style="left:87.00px;top:159.10px;width:488.00px;height:0.80px;background:#e6e6e6;"></div><span class="a t" id="t86" style="left:87.00px;top:161.73px;font:400 7.5px/9.75px 'Liberation Sans', sans-serif;color:#555;">2019-06-05</span><div class="a" style="left:584.00px;top:149.60px;width:12.60px;height:11.00px;background:#f0ad4e;border-radius:2px;"></div><svg class="a" style="left:587.00px;top:151.90px;" width="6.5" height="6.5" viewBox="0 0 6.5 6.5"><path d="M4.4 0.8 H0.8 V5.7 H5.7 V2.8" fill="none" stroke="#fff" stroke-width="1"/><path d="M2.4 4 L5.9 0.5" stroke="#fff" stroke-width="1.1"/></svg><div class="a" style="left:599.00px;top:149.60px;width:12.00px;height:11.00px;background:#fff;border:1px solid #ccc;border-radius:2px;"></div><svg class="a" style="left:601.80px;top:151.90px;" width="6.5" height="7" viewBox="0 0 6.5 7"><rect x="1.6" y="0.3" width="3.3" height="2.2" fill="none" stroke="#222" stroke-width="0.9"/><rect x="0.3" y="2.5" width="5.9" height="2.8" rx="0.6" fill="#222"/><rect x="1.6" y="4.6" width="3.3" height="2.2" fill="#fff" stroke="#222" stroke-width="0.7"/></svg><div class="a" style="left:48.50px;top:181.00px;width:8.00px;height:8.00px;background:#fafafa;border:1px solid #aaa;"></div><span class="a t" id="t87" style="transform:scaleX(0.8982);left:65.00px;top:179.80px;font:400 8px/10.4px 'Liberation Sans', sans-serif;color:#555;">3</span><span class="a t" id="t88" style="left:87.00px;top:180.12px;font:400 7.5px/9.75px 'Liberation Sans', sans-serif;color:#555;">1001010203</span><div class="a" style="left:87.00px;top:189.50px;width:488.00px;height:0.80px;background:#e6e6e6;"></div><span class="a t" id="t89" style="left:87.00px;top:192.12px;font:400 7.5px/9.75px 'Liberation Sans', sans-serif;color:#555;">2019-06-05</span><div class="a" style="left:584.00px;top:180.00px;width:12.60px;height:11.00px;background:#f0ad4e;border-radius:2px;"></div><svg class="a" style="left:587.00px;top:182.30px;" width="6.5" height="6.5" viewBox="0 0 6.5 6.5"><path d="M4.4 0.8 H0.8 V5.7 H5.7 V2.8" fill="none" stroke="#fff" stroke-width="1"/><path d="M2.4 4 L5.9 0.5" stroke="#fff" stroke-width="1.1"/></svg><div class="a" style="left:599.00px;top:180.00px;width:12.00px;height:11.00px;background:#fff;border:1px solid #ccc;border-radius:2px;"></div><svg class="a" style="left:601.80px;top:182.30px;" width="6.5" height="7" viewBox="0 0 6.5 7"><rect x="1.6" y="0.3" width="3.3" height="2.2" fill="none" stroke="#222" stroke-width="0.9"/><rect x="0.3" y="2.5" width="5.9" height="2.8" rx="0.6" fill="#222"/><rect x="1.6" y="4.6" width="3.3" height="2.2" fill="#fff" stroke="#222" stroke-width="0.7"/></svg><span class="a t" id="t90" style="left:44.00px;top:213.60px;font:400 8px/10.4px 'Liberation Sans', sans-serif;color:#555;">Tampil 1 sampai 3 dari 3 data</span><div class="a" style="left:530.00px;top:211.00px;width:89.50px;height:16.00px;background:#fff;border:1px solid #ddd;border-radius:2px;"></div><div class="a" style="left:575.00px;top:211.00px;width:15.00px;height:16.00px;background:#428bca;"></div><span class="a t" id="t91" style="transform:scaleX(1.1390);left:594.00px;top:214.68px;font:400 8.5px/11.05px 'Liberation Sans', sans-serif;color:#777;">Maju</span><div class="a" style="left:43.75px;top:230.00px;width:12.00px;height:11.50px;background:#d9534f;border-radius:2px;"></div><svg class="a" style="left:46.80px;top:232.20px;" width="6.5" height="7.5" viewBox="0 0 6.5 7.5"><rect x="0.5" y="0.9" width="5.5" height="1.1" fill="#fff"/><rect x="2.2" y="0" width="2.1" height="1" fill="#fff"/><path d="M1.1 2.5 H5.4 L5 7.3 H1.5 Z" fill="#fff"/></svg><div class="a" style="left:0.00px;top:472.70px;width:664.00px;height:24.10px;background:linear-gradient(#143c04 0%,#1b520c 35%,#1c6814 85%,#005200 100%);"></div><div class="a" style="left:0.00px;top:496.50px;width:664.00px;height:1.50px;background:#d0dcc8;"></div><span class="a t" id="t92" style="transform:scaleX(0.8641);left:271.40px;top:480.88px;font:400 8.5px/11.05px 'Liberation Sans', sans-serif;color:#eef4ec;">Copyright © 2019 | SiMAK - MOODU</span><div class="a" style="left:96.70px;top:51.40px;width:486.60px;height:416.00px;box-shadow:0 -1px 1px rgba(0,0,0,0.5),1px 1px 2px rgba(20,30,20,0.75),3px 3px 7px rgba(20,30,20,0.55);border-radius:5px 5px 1px 1px;"></div><div class="a" style="left:96.70px;top:51.40px;width:486.60px;height:416.00px;background:linear-gradient(180deg,#eebcb8 0%,#e8aca8 6%,#e8a6a2 40%,#e69c96 100%);border:1px solid rgba(70,50,50,0.75);border-left-color:rgba(70,50,50,0.45);border-radius:5px 5px 1px 1px;"></div><div class="a" style="left:97.70px;top:52.40px;width:484.60px;height:15.60px;background:linear-gradient(100deg,rgba(255,255,255,0.25) 0%,rgba(255,255,255,0.4) 18%,rgba(255,255,255,0.12) 40%,rgba(255,255,255,0.28) 55%,rgba(190,60,60,0.12) 75%,rgba(255,255,255,0.1) 100%);border-radius:4px 4px 0 0;"></div><div class="a" style="left:97.70px;top:52.40px;width:484.60px;height:4.00px;background:linear-gradient(rgba(255,255,255,0.4),rgba(255,255,255,0));border-radius:4px 4px 0 0;"></div><div class="a" style="left:578.30px;top:68.00px;width:4.00px;height:398.40px;background:linear-gradient(90deg,#d8948c,#e8aaa4 50%,#f2c0bc);"></div><div class="a" style="left:97.70px;top:68.00px;width:3.50px;height:398.40px;background:linear-gradient(90deg,#f0c0bc,#e6a8a2 50%,#dc9a94);"></div><div class="a" style="left:97.70px;top:462.40px;width:484.60px;height:4.00px;background:linear-gradient(#e8a49c,#dc9088);"></div><svg class="a" style="left:100.20px;top:55.70px;" width="9.0" height="9.0" viewBox="0 0 9.0 9.0"><defs><radialGradient id="fg526" cx="0.35" cy="0.65" r="0.7"><stop offset="0" stop-color="#ffd000"/><stop offset="0.5" stop-color="#ff7a00"/><stop offset="1" stop-color="#e0203a"/></radialGradient></defs><circle cx="4.5" cy="4.5" r="4.3" fill="url(#fg526)"/><circle cx="5.2" cy="4.2" r="2.2" fill="#2a6ad8"/></svg><span class="a t" id="t93" style="transform:scaleX(0.9146);left:111.70px;top:56.32px;font:400 7.5px/9.75px 'Liberation Sans', sans-serif;color:#1a1a1a;">SiMAK - Surat Permohonan KK - Mozilla Firefox</span><div class="a" style="left:520.80px;top:51.60px;width:31.20px;height:11.10px;background:linear-gradient(rgba(255,245,245,0.55),rgba(235,205,205,0.5) 50%,rgba(210,160,160,0.45));border:1px solid rgba(90,60,60,0.4);border-top:none;border-radius:0 0 4px 4px;"></div><div class="a" style="left:536.00px;top:51.60px;width:0.80px;height:11.10px;background:rgba(90,60,60,0.35);"></div><div class="a" style="left:552.00px;top:51.60px;width:27.00px;height:11.10px;background:linear-gradient(#eca49a 0%,#e07a68 40%,#cc3a22 60%,#d8553c 100%);border:1px solid rgba(90,40,40,0.6);border-top:none;border-radius:0 0 4px 0;"></div><div class="a" style="left:525.06px;top:57.15px;width:6.69px;height:2.40px;background:#f4f4f8;border:0.7px solid #6a6a78;border-radius:1px;"></div><div class="a" style="left:540.48px;top:54.04px;width:7.04px;height:5.55px;border:1.4px solid #f0f0f4;outline:0.6px solid #707080;background:rgba(200,200,210,0.6);"></div><svg class="a" style="left:562.00px;top:54.15px;" width="7.0" height="6.0" viewBox="0 0 7.0 6.0"><path d="M0.8 0.6 L6.2 5.4 M6.2 0.6 L0.8 5.4" stroke="#5a2a2a" stroke-width="2.6"/><path d="M0.8 0.6 L6.2 5.4 M6.2 0.6 L0.8 5.4" stroke="#fff" stroke-width="1.6"/></svg><div class="a" style="left:101.20px;top:68.00px;width:477.30px;height:22.00px;background:#f9f9fa;border-bottom:1px solid #d8d8d8;"></div><div class="a" style="left:104.60px;top:69.70px;width:451.40px;height:17.90px;background:#f0f0f2;border:1px solid #d4d4d8;border-radius:2px;"></div><svg class="a" style="left:109.50px;top:75.00px;" width="9" height="9" viewBox="0 0 9 9"><circle cx="4.5" cy="4.5" r="3.8" fill="none" stroke="#666" stroke-width="1"/><rect x="4" y="3.8" width="1" height="3" fill="#666"/><rect x="4" y="2.2" width="1" height="1" fill="#666"/></svg><span class="a t" id="t94" style="transform:scaleX(0.9266);left:123.70px;top:75.08px;font:400 8.5px/11.05px 'Liberation Sans', sans-serif;color:#202020;">localhost</span><span class="a t" id="t95" style="transform:scaleX(0.9639);left:154.80px;top:75.08px;font:400 8.5px/11.05px 'Liberation Sans', sans-serif;color:#8a8a8a;">/asimkel/data/print/sr-pkkb?isu=1</span><svg class="a" style="left:458.50px;top:74.50px;" width="8" height="10" viewBox="0 0 8 10"><rect x="0.6" y="0.6" width="6.8" height="8.8" fill="none" stroke="#555" stroke-width="1"/><path d="M2 3H6M2 5H6M2 7H5" stroke="#555" stroke-width="0.8"/></svg><div class="a" style="left:474.00px;top:74.00px;width:22.70px;height:10.60px;background:#e8e8ea;border:1px solid #d0d0d4;border-radius:5px;"></div><span class="a t" id="t96" style="transform:scaleX(1.0702);left:478.00px;top:75.85px;font:400 7px/9.1px 'Liberation Sans', sans-serif;color:#333;">90%</span><div class="a" style="left:504.50px;top:71.50px;width:0.80px;height:14.50px;background:#dcdcdc;"></div><div class="a" style="left:511.50px;top:78.20px;width:2.00px;height:2.00px;background:#444;border-radius:1px;"></div><div class="a" style="left:514.90px;top:78.20px;width:2.00px;height:2.00px;background:#444;border-radius:1px;"></div><div class="a" style="left:518.30px;top:78.20px;width:2.00px;height:2.00px;background:#444;border-radius:1px;"></div><svg class="a" style="left:526.30px;top:74.30px;" width="10.5" height="10" viewBox="0 0 10.5 10"><path d="M1 1.2 H9.5 V5 C9.5 7.5 7.5 9 5.25 9 C3 9 1 7.5 1 5 Z" fill="none" stroke="#444" stroke-width="1.1"/><path d="M3.2 4 L5.25 6 L7.3 4" fill="none" stroke="#444" stroke-width="1.1"/></svg><svg class="a" style="left:542.80px;top:74.00px;" width="10.5" height="10.5" viewBox="0 0 10.5 10.5"><path d="M5.25 0.8 L6.5 3.8 L9.7 4 L7.3 6.1 L8 9.3 L5.25 7.6 L2.5 9.3 L3.2 6.1 L0.8 4 L4 3.8 Z" fill="none" stroke="#333" stroke-width="1.1" stroke-linejoin="round"/></svg><div class="a" style="left:563.00px;top:75.50px;width:8.50px;height:1.30px;background:#444;"></div><div class="a" style="left:563.00px;top:78.50px;width:8.50px;height:1.30px;background:#444;"></div><div class="a" style="left:563.00px;top:81.50px;width:8.50px;height:1.30px;background:#444;"></div><div class="a" style="left:101.00px;top:90.00px;width:468.50px;height:373.00px;background:#fff;"></div><div class="a" style="left:569.50px;top:90.00px;width:9.00px;height:373.00px;background:#ececec;border-left:1px solid #e0e0e0;"></div><svg class="a" style="left:572.00px;top:93.00px;" width="4" height="3" viewBox="0 0 4 3"><path d="M0 3H4L2 0Z" fill="#505050"/></svg><svg class="a" style="left:572.00px;top:457.00px;" width="4" height="3" viewBox="0 0 4 3"><path d="M0 0H4L2 3Z" fill="#505050"/></svg><div class="a" style="left:570.00px;top:99.00px;width:8.50px;height:344.00px;background:linear-gradient(90deg,#fafafa,#ececee 50%,#d0d0d6);border-left:1px solid #d0d0d0;border-right:1px solid #c0c0c4;border-radius:1px;"></div><div class="a" style="left:572.40px;top:269.00px;width:3.20px;height:0.80px;background:#777;"></div><div class="a" style="left:572.40px;top:270.90px;width:3.20px;height:0.80px;background:#777;"></div><div class="a" style="left:572.40px;top:272.80px;width:3.20px;height:0.80px;background:#777;"></div><div class="a " style="left:101.00px;top:90.00px;width:468.50px;height:373.00px;overflow:hidden;"><svg class="a" style="left:164.00px;top:3.50px;" width="37" height="37" viewBox="0 0 719 719"><path d="M150 225 C50 280 40 430 140 510 C200 570 280 645 360 662 C440 645 520 570 580 510 C680 430 670 280 570 225 L540 300 C560 390 520 470 460 520 L360 600 L260 520 C200 470 160 390 180 300 Z" fill="#e6dc10" stroke="#8a8010" stroke-width="14"/>
<path d="M350 68 L608 172 C575 335 510 475 350 600 C190 475 125 335 100 172 Z" fill="#e01a1a" stroke="#a01010" stroke-width="8"/>
<path d="M350 110 L565 198 C535 335 480 450 350 555 C220 450 165 335 135 198 Z" fill="none" stroke="#f4e8e8" stroke-width="16"/>
<path d="M350 135 L540 212 C512 335 462 440 350 530 C238 440 188 335 160 212 Z" fill="#139a38"/>
<path d="M360 139 L540 212 C520 300 495 370 455 430 L360 430 Z" fill="#111"/>
<path d="M228 430 L472 430 C440 475 400 505 350 530 C300 505 260 475 228 430 Z" fill="#1a2a90"/>
<path d="M290 470 L350 505 L410 470 L350 485 Z" fill="#fff"/>
<path d="M285 360 C285 300 290 260 300 230 M250 240 C270 220 300 220 330 245 M265 270 C285 240 310 240 325 270 M440 360 C440 300 435 260 425 230 M390 245 C410 220 440 220 470 240 M400 270 C415 240 440 240 460 270" stroke="#d8d020" stroke-width="14" fill="none"/>
<circle cx="355" cy="165" r="22" fill="#fff"/><circle cx="350" cy="410" r="26" fill="#fff"/></svg><span class="a t" id="t97" style="transform:scaleX(0.9678);left:214.80px;top:4.52px;font:700 7.5px/9.75px 'Liberation Sans', sans-serif;color:#111;">PEMERINTAH KOTA</span><span class="a t" id="t98" style="transform:scaleX(0.9750);left:226.00px;top:11.73px;font:700 7.5px/9.75px 'Liberation Sans', sans-serif;color:#111;">GORONTALO</span><span class="a t" id="t99" style="transform:scaleX(0.9650);left:203.80px;top:21.93px;font:700 7.5px/9.75px 'Liberation Sans', sans-serif;color:#111;">KECAMATAN KOTA TIMUR</span><span class="a t" id="t100" style="transform:scaleX(0.9280);left:213.00px;top:31.02px;font:700 7.5px/9.75px 'Liberation Sans', sans-serif;color:#111;">KELURAHAN MOODU</span><span class="a t" id="t101" style="transform:scaleX(1.0122);left:204.80px;top:44.85px;font:400 7px/9.1px 'Liberation Sans', sans-serif;color:#222;text-decoration:underline;text-decoration-color:#777;">FORMULIR ISIAN BIODATA</span><span class="a t" id="t102" style="transform:scaleX(0.9311);left:232.00px;top:52.65px;font:400 7px/9.1px 'Liberation Sans', sans-serif;color:#222;text-decoration:underline;text-decoration-color:#777;">KELUARGA</span><span class="a t" id="t103" style="transform:scaleX(1.0218);left:202.00px;top:60.05px;font:400 7px/9.1px 'Liberation Sans', sans-serif;color:#222;">Nomor : 100/KESRA/MOODU</span><span class="a t" id="t104" style="transform:scaleX(1.0923);left:231.00px;top:67.75px;font:400 7px/9.1px 'Liberation Sans', sans-serif;color:#222;">/01/V/2019</span><span class="a t" id="t105" style="letter-spacing:0.017px;left:11.40px;top:85.34px;font:400 6.1px/7.93px 'Liberation Sans', sans-serif;color:#222;-webkit-text-stroke:0.17px currentColor;margin-top:-0.7px;">NAMA KEPALA</span><span class="a t" id="t106" style="transform:scaleX(0.8915);left:11.40px;top:92.44px;font:400 6.1px/7.93px 'Liberation Sans', sans-serif;color:#222;-webkit-text-stroke:0.17px currentColor;margin-top:-0.7px;">KELUARGA</span><span class="a t" id="t107" style="letter-spacing:0.374px;left:81.30px;top:88.74px;font:400 6.1px/7.93px 'Liberation Sans', sans-serif;color:#222;-webkit-text-stroke:0.17px currentColor;margin-top:-0.7px;">: PUDIN BOTUIBO</span><span class="a t" id="t108" style="transform:scaleX(0.9826);left:11.40px;top:104.84px;font:400 6.1px/7.93px 'Liberation Sans', sans-serif;color:#222;-webkit-text-stroke:0.17px currentColor;margin-top:-0.7px;">KELURAHAN</span><span class="a t" id="t109" style="letter-spacing:0.611px;left:81.30px;top:104.84px;font:400 6.1px/7.93px 'Liberation Sans', sans-serif;color:#222;-webkit-text-stroke:0.17px currentColor;margin-top:-0.7px;">: Moodu</span><span class="a t" id="t110" style="letter-spacing:0.071px;left:11.40px;top:117.64px;font:400 6.1px/7.93px 'Liberation Sans', sans-serif;color:#222;-webkit-text-stroke:0.17px currentColor;margin-top:-0.7px;">KECAMATAN</span><span class="a t" id="t111" style="letter-spacing:0.622px;left:81.30px;top:117.64px;font:400 6.1px/7.93px 'Liberation Sans', sans-serif;color:#222;-webkit-text-stroke:0.17px currentColor;margin-top:-0.7px;">: Kota Timur</span><span class="a t" id="t112" style="letter-spacing:0.133px;left:11.40px;top:129.54px;font:400 6.1px/7.93px 'Liberation Sans', sans-serif;color:#222;-webkit-text-stroke:0.17px currentColor;margin-top:-0.7px;">ALAMAT</span><span class="a t" id="t113" style="transform:scaleX(0.9664);left:403.70px;top:101.14px;font:400 6.1px/7.93px 'Liberation Sans', sans-serif;color:#222;-webkit-text-stroke:0.17px currentColor;margin-top:-0.7px;">KODE</span><span class="a t" id="t114" style="transform:scaleX(0.8777);left:403.70px;top:108.14px;font:400 6.1px/7.93px 'Liberation Sans', sans-serif;color:#222;-webkit-text-stroke:0.17px currentColor;margin-top:-0.7px;">POS</span><span class="a t" id="t115" style="letter-spacing:0.868px;left:431.50px;top:104.64px;font:400 6.1px/7.93px 'Liberation Sans', sans-serif;color:#222;-webkit-text-stroke:0.17px currentColor;margin-top:-0.7px;">: 96114</span><span class="a t" id="t116" style="letter-spacing:0.668px;left:403.70px;top:126.24px;font:400 6.1px/7.93px 'Liberation Sans', sans-serif;color:#222;-webkit-text-stroke:0.17px currentColor;margin-top:-0.7px;">RT :</span><span class="a t" id="t117" style="letter-spacing:0.564px;left:403.70px;top:133.54px;font:400 6.1px/7.93px 'Liberation Sans', sans-serif;color:#222;-webkit-text-stroke:0.17px currentColor;margin-top:-0.7px;">003</span><span class="a t" id="t118" style="letter-spacing:0.715px;left:431.50px;top:129.74px;font:400 6.1px/7.93px 'Liberation Sans', sans-serif;color:#222;-webkit-text-stroke:0.17px currentColor;margin-top:-0.7px;">RW : 001</span><span class="a t" id="t119" style="letter-spacing:0.572px;left:81.30px;top:129.54px;font:400 6.1px/7.93px 'Liberation Sans', sans-serif;color:#222;-webkit-text-stroke:0.17px currentColor;margin-top:-0.7px;">: Jl.Wolter</span><div class="a" style="left:4.20px;top:146.50px;width:1.00px;height:52.00px;background:#3a3a3a;"></div><div class="a" style="left:16.10px;top:146.50px;width:1.00px;height:52.00px;background:#3a3a3a;"></div><div class="a" style="left:269.00px;top:146.50px;width:1.00px;height:52.00px;background:#3a3a3a;"></div><div class="a" style="left:287.30px;top:146.50px;width:1.00px;height:52.00px;background:#3a3a3a;"></div><div class="a" style="left:377.90px;top:146.50px;width:1.00px;height:52.00px;background:#3a3a3a;"></div><div class="a" style="left:424.10px;top:146.50px;width:1.00px;height:52.00px;background:#3a3a3a;"></div><div class="a" style="left:463.00px;top:146.50px;width:1.00px;height:52.00px;background:#3a3a3a;"></div><div class="a" style="left:4.20px;top:146.50px;width:459.80px;height:1.00px;background:#3a3a3a;"></div><div class="a" style="left:4.20px;top:162.50px;width:459.80px;height:1.00px;background:#3a3a3a;"></div><div class="a" style="left:4.20px;top:174.50px;width:459.80px;height:1.00px;background:#3a3a3a;"></div><div class="a" style="left:4.20px;top:186.00px;width:459.80px;height:1.00px;background:#3a3a3a;"></div><div class="a" style="left:4.20px;top:197.50px;width:459.80px;height:1.00px;background:#3a3a3a;"></div><span class="a t" id="t120" style="transform:scaleX(1.1034);left:5.80px;top:151.98px;font:700 6.8px/8.84px 'Liberation Sans', sans-serif;color:#222;">No</span><span class="a t" id="t121" style="transform:scaleX(1.1353);left:115.50px;top:151.98px;font:700 6.8px/8.84px 'Liberation Sans', sans-serif;color:#222;">Nama Lengkap</span><span class="a t" id="t122" style="transform:scaleX(1.2479);left:271.60px;top:151.98px;font:700 6.8px/8.84px 'Liberation Sans', sans-serif;color:#222;">L/P</span><span class="a t" id="t123" style="transform:scaleX(1.1714);left:308.40px;top:151.98px;font:700 6.8px/8.84px 'Liberation Sans', sans-serif;color:#222;">Tempat Lahir</span><span class="a t" id="t124" style="transform:scaleX(1.1775);left:387.20px;top:148.78px;font:700 6.8px/8.84px 'Liberation Sans', sans-serif;color:#222;">Tanggal</span><span class="a t" id="t125" style="transform:scaleX(0.8902);left:397.00px;top:155.98px;font:700 6.8px/8.84px 'Liberation Sans', sans-serif;color:#222;">Lahir</span><span class="a t" id="t126" style="transform:scaleX(1.1236);left:425.70px;top:151.98px;font:700 6.8px/8.84px 'Liberation Sans', sans-serif;color:#222;">Gol.Darah</span><span class="a t" id="t127" style="transform:scaleX(1.0323);left:8.80px;top:166.64px;font:400 6.1px/7.93px 'Liberation Sans', sans-serif;color:#222;-webkit-text-stroke:0.17px currentColor;margin-top:-0.7px;">1</span><span class="a t" id="t128" style="letter-spacing:0.318px;left:19.10px;top:166.64px;font:400 6.1px/7.93px 'Liberation Sans', sans-serif;color:#222;-webkit-text-stroke:0.17px currentColor;margin-top:-0.7px;">PUDIN BOTUIBO</span><span class="a t" id="t129" style="transform:scaleX(1.0912);left:276.80px;top:166.64px;font:400 6.1px/7.93px 'Liberation Sans', sans-serif;color:#222;-webkit-text-stroke:0.17px currentColor;margin-top:-0.7px;">L</span><span class="a t" id="t130" style="letter-spacing:0.542px;left:289.90px;top:166.64px;font:400 6.1px/7.93px 'Liberation Sans', sans-serif;color:#222;-webkit-text-stroke:0.17px currentColor;margin-top:-0.7px;">Gorontalo</span><span class="a t" id="t131" style="letter-spacing:0.798px;left:381.50px;top:166.64px;font:400 6.1px/7.93px 'Liberation Sans', sans-serif;color:#222;-webkit-text-stroke:0.17px currentColor;margin-top:-0.7px;">1970-08-11</span><span class="a t" id="t132" style="letter-spacing:0.106px;left:441.00px;top:166.64px;font:400 6.1px/7.93px 'Liberation Sans', sans-serif;color:#222;-webkit-text-stroke:0.17px currentColor;margin-top:-0.7px;">A-</span><span class="a t" id="t133" style="transform:scaleX(1.0323);left:8.80px;top:178.14px;font:400 6.1px/7.93px 'Liberation Sans', sans-serif;color:#222;-webkit-text-stroke:0.17px currentColor;margin-top:-0.7px;">2</span><span class="a t" id="t134" style="letter-spacing:0.233px;left:19.10px;top:178.14px;font:400 6.1px/7.93px 'Liberation Sans', sans-serif;color:#222;-webkit-text-stroke:0.17px currentColor;margin-top:-0.7px;">WARNI SUWAGE</span><span class="a t" id="t135" style="transform:scaleX(0.9073);left:276.80px;top:178.14px;font:400 6.1px/7.93px 'Liberation Sans', sans-serif;color:#222;-webkit-text-stroke:0.17px currentColor;margin-top:-0.7px;">P</span><span class="a t" id="t136" style="letter-spacing:0.542px;left:289.90px;top:178.14px;font:400 6.1px/7.93px 'Liberation Sans', sans-serif;color:#222;-webkit-text-stroke:0.17px currentColor;margin-top:-0.7px;">Gorontalo</span><span class="a t" id="t137" style="letter-spacing:0.748px;left:381.50px;top:178.14px;font:400 6.1px/7.93px 'Liberation Sans', sans-serif;color:#222;-webkit-text-stroke:0.17px currentColor;margin-top:-0.7px;">1976-10-12</span><span class="a t" id="t138" style="transform:scaleX(1.0299);left:442.00px;top:178.14px;font:400 6.1px/7.93px 'Liberation Sans', sans-serif;color:#222;-webkit-text-stroke:0.17px currentColor;margin-top:-0.7px;">A</span><span class="a t" id="t139" style="transform:scaleX(1.0323);left:8.80px;top:189.74px;font:400 6.1px/7.93px 'Liberation Sans', sans-serif;color:#222;-webkit-text-stroke:0.17px currentColor;margin-top:-0.7px;">3</span><span class="a t" id="t140" style="letter-spacing:0.288px;left:19.10px;top:189.74px;font:400 6.1px/7.93px 'Liberation Sans', sans-serif;color:#222;-webkit-text-stroke:0.17px currentColor;margin-top:-0.7px;">BAMBO BOTUIBO</span><span class="a t" id="t141" style="transform:scaleX(1.0912);left:276.80px;top:189.74px;font:400 6.1px/7.93px 'Liberation Sans', sans-serif;color:#222;-webkit-text-stroke:0.17px currentColor;margin-top:-0.7px;">L</span><span class="a t" id="t142" style="letter-spacing:0.542px;left:289.90px;top:189.74px;font:400 6.1px/7.93px 'Liberation Sans', sans-serif;color:#222;-webkit-text-stroke:0.17px currentColor;margin-top:-0.7px;">Gorontalo</span><span class="a t" id="t143" style="letter-spacing:0.798px;left:381.50px;top:189.74px;font:400 6.1px/7.93px 'Liberation Sans', sans-serif;color:#222;-webkit-text-stroke:0.17px currentColor;margin-top:-0.7px;">2009-11-03</span><span class="a t" id="t144" style="letter-spacing:0.106px;left:441.00px;top:189.74px;font:400 6.1px/7.93px 'Liberation Sans', sans-serif;color:#222;-webkit-text-stroke:0.17px currentColor;margin-top:-0.7px;">B-</span><div class="a" style="left:4.20px;top:204.20px;width:1.00px;height:73.00px;background:#3a3a3a;"></div><div class="a" style="left:16.10px;top:204.20px;width:1.00px;height:73.00px;background:#3a3a3a;"></div><div class="a" style="left:46.00px;top:204.20px;width:1.00px;height:73.00px;background:#3a3a3a;"></div><div class="a" style="left:115.10px;top:204.20px;width:1.00px;height:73.00px;background:#3a3a3a;"></div><div class="a" style="left:184.70px;top:204.20px;width:1.00px;height:73.00px;background:#3a3a3a;"></div><div class="a" style="left:254.30px;top:204.20px;width:1.00px;height:73.00px;background:#3a3a3a;"></div><div class="a" style="left:353.70px;top:204.20px;width:1.00px;height:73.00px;background:#3a3a3a;"></div><div class="a" style="left:408.80px;top:204.20px;width:1.00px;height:73.00px;background:#3a3a3a;"></div><div class="a" style="left:463.00px;top:204.20px;width:1.00px;height:73.00px;background:#3a3a3a;"></div><div class="a" style="left:4.20px;top:204.20px;width:459.80px;height:1.00px;background:#3a3a3a;"></div><div class="a" style="left:4.20px;top:220.70px;width:459.80px;height:1.00px;background:#3a3a3a;"></div><div class="a" style="left:4.20px;top:239.50px;width:459.80px;height:1.00px;background:#3a3a3a;"></div><div class="a" style="left:4.20px;top:257.90px;width:459.80px;height:1.00px;background:#3a3a3a;"></div><div class="a" style="left:4.20px;top:276.20px;width:459.80px;height:1.00px;background:#3a3a3a;"></div><span class="a t" id="t145" style="transform:scaleX(1.1034);left:5.80px;top:209.78px;font:700 6.8px/8.84px 'Liberation Sans', sans-serif;color:#222;">No</span><span class="a t" id="t146" style="transform:scaleX(1.1336);left:19.00px;top:209.78px;font:700 6.8px/8.84px 'Liberation Sans', sans-serif;color:#222;">Agama</span><span class="a t" id="t147" style="transform:scaleX(1.1333);left:60.70px;top:209.78px;font:700 6.8px/8.84px 'Liberation Sans', sans-serif;color:#222;">Pendidikan</span><span class="a t" id="t148" style="transform:scaleX(1.1891);left:131.00px;top:209.78px;font:700 6.8px/8.84px 'Liberation Sans', sans-serif;color:#222;">Pekerjaan</span><span class="a t" id="t149" style="transform:scaleX(1.1693);left:208.00px;top:206.28px;font:700 6.8px/8.84px 'Liberation Sans', sans-serif;color:#222;">Status</span><span class="a t" id="t150" style="transform:scaleX(1.1699);left:197.80px;top:213.88px;font:700 6.8px/8.84px 'Liberation Sans', sans-serif;color:#222;">Perkawinan</span><span class="a t" id="t151" style="transform:scaleX(1.1505);left:269.20px;top:206.28px;font:700 6.8px/8.84px 'Liberation Sans', sans-serif;color:#222;">Status Hub. Dalam</span><span class="a t" id="t152" style="transform:scaleX(1.1755);left:286.60px;top:213.88px;font:700 6.8px/8.84px 'Liberation Sans', sans-serif;color:#222;">Keluarga</span><span class="a t" id="t153" style="transform:scaleX(1.1689);left:360.40px;top:209.78px;font:700 6.8px/8.84px 'Liberation Sans', sans-serif;color:#222;">Nama Ayah</span><span class="a t" id="t154" style="transform:scaleX(1.1440);left:418.60px;top:209.78px;font:700 6.8px/8.84px 'Liberation Sans', sans-serif;color:#222;">Nama Ibu</span><span class="a t" id="t155" style="transform:scaleX(1.0323);left:8.80px;top:224.43px;font:400 6.1px/7.93px 'Liberation Sans', sans-serif;color:#222;-webkit-text-stroke:0.17px currentColor;margin-top:-0.7px;">1</span><span class="a t" id="t156" style="letter-spacing:0.559px;left:19.10px;top:224.43px;font:400 6.1px/7.93px 'Liberation Sans', sans-serif;color:#222;-webkit-text-stroke:0.17px currentColor;margin-top:-0.7px;">Katholik</span><span class="a t" id="t157" style="letter-spacing:0.585px;left:49.70px;top:224.43px;font:400 6.1px/7.93px 'Liberation Sans', sans-serif;color:#222;-webkit-text-stroke:0.17px currentColor;margin-top:-0.7px;">Diploma IV/ Strata</span><span class="a t" id="t158" style="transform:scaleX(1.1743);left:50.00px;top:231.33px;font:400 6.1px/7.93px 'Liberation Sans', sans-serif;color:#222;-webkit-text-stroke:0.17px currentColor;margin-top:-0.7px;">I</span><span class="a t" id="t159" style="letter-spacing:0.469px;left:117.80px;top:224.43px;font:400 6.1px/7.93px 'Liberation Sans', sans-serif;color:#222;-webkit-text-stroke:0.17px currentColor;margin-top:-0.7px;">Dosen</span><span class="a t" id="t160" style="letter-spacing:0.298px;left:188.00px;top:224.43px;font:400 6.1px/7.93px 'Liberation Sans', sans-serif;color:#222;-webkit-text-stroke:0.17px currentColor;margin-top:-0.7px;">Kawin</span><span class="a t" id="t161" style="letter-spacing:0.524px;left:256.40px;top:224.43px;font:400 6.1px/7.93px 'Liberation Sans', sans-serif;color:#222;-webkit-text-stroke:0.17px currentColor;margin-top:-0.7px;">Kepala Keluarga</span><span class="a t" id="t162" style="letter-spacing:0.140px;left:356.50px;top:224.43px;font:400 6.1px/7.93px 'Liberation Sans', sans-serif;color:#222;-webkit-text-stroke:0.17px currentColor;margin-top:-0.7px;">BERLIN MILLER</span><span class="a t" id="t163" style="letter-spacing:0.123px;left:411.60px;top:224.43px;font:400 6.1px/7.93px 'Liberation Sans', sans-serif;color:#222;-webkit-text-stroke:0.17px currentColor;margin-top:-0.7px;">SINCE TOGEL</span><span class="a t" id="t164" style="transform:scaleX(1.0323);left:8.80px;top:242.83px;font:400 6.1px/7.93px 'Liberation Sans', sans-serif;color:#222;-webkit-text-stroke:0.17px currentColor;margin-top:-0.7px;">2</span><span class="a t" id="t165" style="letter-spacing:1.084px;left:19.10px;top:242.83px;font:400 6.1px/7.93px 'Liberation Sans', sans-serif;color:#222;-webkit-text-stroke:0.17px currentColor;margin-top:-0.7px;">Islam</span><span class="a t" id="t166" style="letter-spacing:1.002px;left:49.70px;top:242.83px;font:400 6.1px/7.93px 'Liberation Sans', sans-serif;color:#222;-webkit-text-stroke:0.17px currentColor;margin-top:-0.7px;">Tamat</span><span class="a t" id="t167" style="letter-spacing:0.505px;left:49.70px;top:249.74px;font:400 6.1px/7.93px 'Liberation Sans', sans-serif;color:#222;-webkit-text-stroke:0.17px currentColor;margin-top:-0.7px;">SD/Sederajat</span><span class="a t" id="t168" style="letter-spacing:0.402px;left:117.80px;top:242.83px;font:400 6.1px/7.93px 'Liberation Sans', sans-serif;color:#222;-webkit-text-stroke:0.17px currentColor;margin-top:-0.7px;">Bidan</span><span class="a t" id="t169" style="letter-spacing:0.298px;left:188.00px;top:242.83px;font:400 6.1px/7.93px 'Liberation Sans', sans-serif;color:#222;-webkit-text-stroke:0.17px currentColor;margin-top:-0.7px;">Kawin</span><span class="a t" id="t170" style="letter-spacing:0.693px;left:256.40px;top:242.83px;font:400 6.1px/7.93px 'Liberation Sans', sans-serif;color:#222;-webkit-text-stroke:0.17px currentColor;margin-top:-0.7px;">Istri</span><span class="a t" id="t171" style="letter-spacing:0.349px;left:356.50px;top:242.83px;font:400 6.1px/7.93px 'Liberation Sans', sans-serif;color:#222;-webkit-text-stroke:0.17px currentColor;margin-top:-0.7px;">YUSUF HIDIJA</span><span class="a t" id="t172" style="transform:scaleX(0.9520);left:411.60px;top:242.83px;font:400 6.1px/7.93px 'Liberation Sans', sans-serif;color:#222;-webkit-text-stroke:0.17px currentColor;margin-top:-0.7px;">ITA PURNAMA</span><span class="a t" id="t173" style="transform:scaleX(1.0323);left:8.80px;top:261.13px;font:400 6.1px/7.93px 'Liberation Sans', sans-serif;color:#222;-webkit-text-stroke:0.17px currentColor;margin-top:-0.7px;">3</span><span class="a t" id="t174" style="letter-spacing:1.084px;left:19.10px;top:261.13px;font:400 6.1px/7.93px 'Liberation Sans', sans-serif;color:#222;-webkit-text-stroke:0.17px currentColor;margin-top:-0.7px;">Islam</span><span class="a t" id="t175" style="letter-spacing:0.544px;left:49.70px;top:261.13px;font:400 6.1px/7.93px 'Liberation Sans', sans-serif;color:#222;-webkit-text-stroke:0.17px currentColor;margin-top:-0.7px;">SLTA/Sederajat</span><span class="a t" id="t176" style="letter-spacing:0.706px;left:117.80px;top:261.13px;font:400 6.1px/7.93px 'Liberation Sans', sans-serif;color:#222;-webkit-text-stroke:0.17px currentColor;margin-top:-0.7px;">Belum/Tidak</span><span class="a t" id="t177" style="letter-spacing:0.588px;left:117.80px;top:268.03px;font:400 6.1px/7.93px 'Liberation Sans', sans-serif;color:#222;-webkit-text-stroke:0.17px currentColor;margin-top:-0.7px;">Bekerja</span><span class="a t" id="t178" style="letter-spacing:0.442px;left:188.00px;top:261.13px;font:400 6.1px/7.93px 'Liberation Sans', sans-serif;color:#222;-webkit-text-stroke:0.17px currentColor;margin-top:-0.7px;">Belum Kawin</span><span class="a t" id="t179" style="letter-spacing:1.236px;left:256.40px;top:261.13px;font:400 6.1px/7.93px 'Liberation Sans', sans-serif;color:#222;-webkit-text-stroke:0.17px currentColor;margin-top:-0.7px;">Anak</span><span class="a t" id="t180" style="letter-spacing:1.133px;left:356.50px;top:261.13px;font:400 6.1px/7.93px 'Liberation Sans', sans-serif;color:#222;-webkit-text-stroke:0.17px currentColor;margin-top:-0.7px;">PUDIN</span><span class="a t" id="t181" style="letter-spacing:0.344px;left:356.50px;top:268.24px;font:400 6.1px/7.93px 'Liberation Sans', sans-serif;color:#222;-webkit-text-stroke:0.17px currentColor;margin-top:-0.7px;">BOTUIBO</span><span class="a t" id="t182" style="letter-spacing:0.577px;left:411.60px;top:261.13px;font:400 6.1px/7.93px 'Liberation Sans', sans-serif;color:#222;-webkit-text-stroke:0.17px currentColor;margin-top:-0.7px;">WARNI</span><span class="a t" id="t183" style="letter-spacing:0.308px;left:411.60px;top:268.24px;font:400 6.1px/7.93px 'Liberation Sans', sans-serif;color:#222;-webkit-text-stroke:0.17px currentColor;margin-top:-0.7px;">SUWAGE</span><span class="a t" id="t184" style="letter-spacing:0.318px;left:7.70px;top:297.35px;font:400 6.7px/8.71px 'Liberation Sans', sans-serif;color:#222;-webkit-text-stroke:0.17px currentColor;margin-top:-0.7px;">Tanda Tangan dan atau Cap Jempol Kiri</span><span class="a t" id="t185" style="letter-spacing:0.278px;left:41.30px;top:304.25px;font:400 6.7px/8.71px 'Liberation Sans', sans-serif;color:#222;-webkit-text-stroke:0.17px currentColor;margin-top:-0.7px;">Yang Bersangkutan</span><span class="a t" id="t186" style="transform:scaleX(0.9855);left:47.00px;top:360.14px;font:400 6.7px/8.71px 'Liberation Sans', sans-serif;color:#222;-webkit-text-stroke:0.17px currentColor;margin-top:-0.7px;">PUDIN BOTUIBO</span><span class="a t" id="t187" style="letter-spacing:0.275px;left:375.50px;top:285.25px;font:400 6.7px/8.71px 'Liberation Sans', sans-serif;color:#222;-webkit-text-stroke:0.17px currentColor;margin-top:-0.7px;">Gorontalo, 08 Juli 2019</span><span class="a t" id="t188" style="letter-spacing:0.179px;left:385.70px;top:293.64px;font:400 6.7px/8.71px 'Liberation Sans', sans-serif;color:#222;-webkit-text-stroke:0.17px currentColor;margin-top:-0.7px;">Kelurahan Moodu</span><span class="a t" id="t189" style="letter-spacing:0.121px;left:399.00px;top:300.64px;font:400 6.7px/8.71px 'Liberation Sans', sans-serif;color:#222;-webkit-text-stroke:0.17px currentColor;margin-top:-0.7px;">An.Lurah</span><span class="a t" id="t190" style="letter-spacing:0.210px;left:397.00px;top:307.44px;font:400 6.7px/8.71px 'Liberation Sans', sans-serif;color:#222;-webkit-text-stroke:0.17px currentColor;margin-top:-0.7px;">Sekretaris</span><span class="a t" id="t191" style="transform:scaleX(1.0314);left:393.00px;top:359.98px;font:700 6.8px/8.84px 'Liberation Sans', sans-serif;color:#222;">IWAN MUSA</span><span class="a t" id="t192" style="letter-spacing:0.474px;left:378.00px;top:370.14px;font:400 6.7px/8.71px 'Liberation Sans', sans-serif;color:#222;-webkit-text-stroke:0.17px currentColor;margin-top:-0.7px;">NIP : 9832671193464</span><svg class="a" style="left:359.00px;top:311.00px;" width="110" height="50" viewBox="0 0 1094 497"><g fill="none" stroke="#1a1a1a" stroke-width="9" stroke-linecap="round" stroke-linejoin="round">
<path d="M240 270 C270 200 300 120 270 80 C240 40 120 50 80 100 C50 140 80 170 150 160 C220 150 290 140 340 160"/>
<path d="M300 150 C220 140 120 170 70 220 C30 270 70 320 150 300 C220 280 270 230 290 170"/>
<path d="M245 275 C270 230 300 180 315 165 C320 210 320 240 330 255 C350 220 380 190 400 175"/>
<path d="M340 240 C380 160 450 90 510 100 C560 110 530 190 470 230 C440 255 400 250 420 215 C450 190 475 205 478 235 C490 190 500 170 510 200 C515 230 520 235 530 200 C540 170 550 175 552 230 C565 180 580 140 600 110 C610 150 590 200 600 230 C615 190 640 180 650 215 C660 235 680 215 690 190 C700 170 720 180 715 210 C710 230 740 225 760 200 C770 150 790 120 800 160 C790 200 800 220 820 205 C840 190 850 180 860 200 C880 215 900 200 920 170 C940 145 970 120 990 125 C1005 140 980 165 960 150"/>
<path d="M230 372 C400 330 650 270 800 262 C870 258 920 260 955 262"/>
<path d="M232 372 L270 355"/>
<path d="M880 180 C960 170 1030 230 1020 320 C1010 400 950 450 880 450 C810 450 775 390 780 330 C785 270 830 220 880 190"/>
</g></svg></div></div></div></body></html>
